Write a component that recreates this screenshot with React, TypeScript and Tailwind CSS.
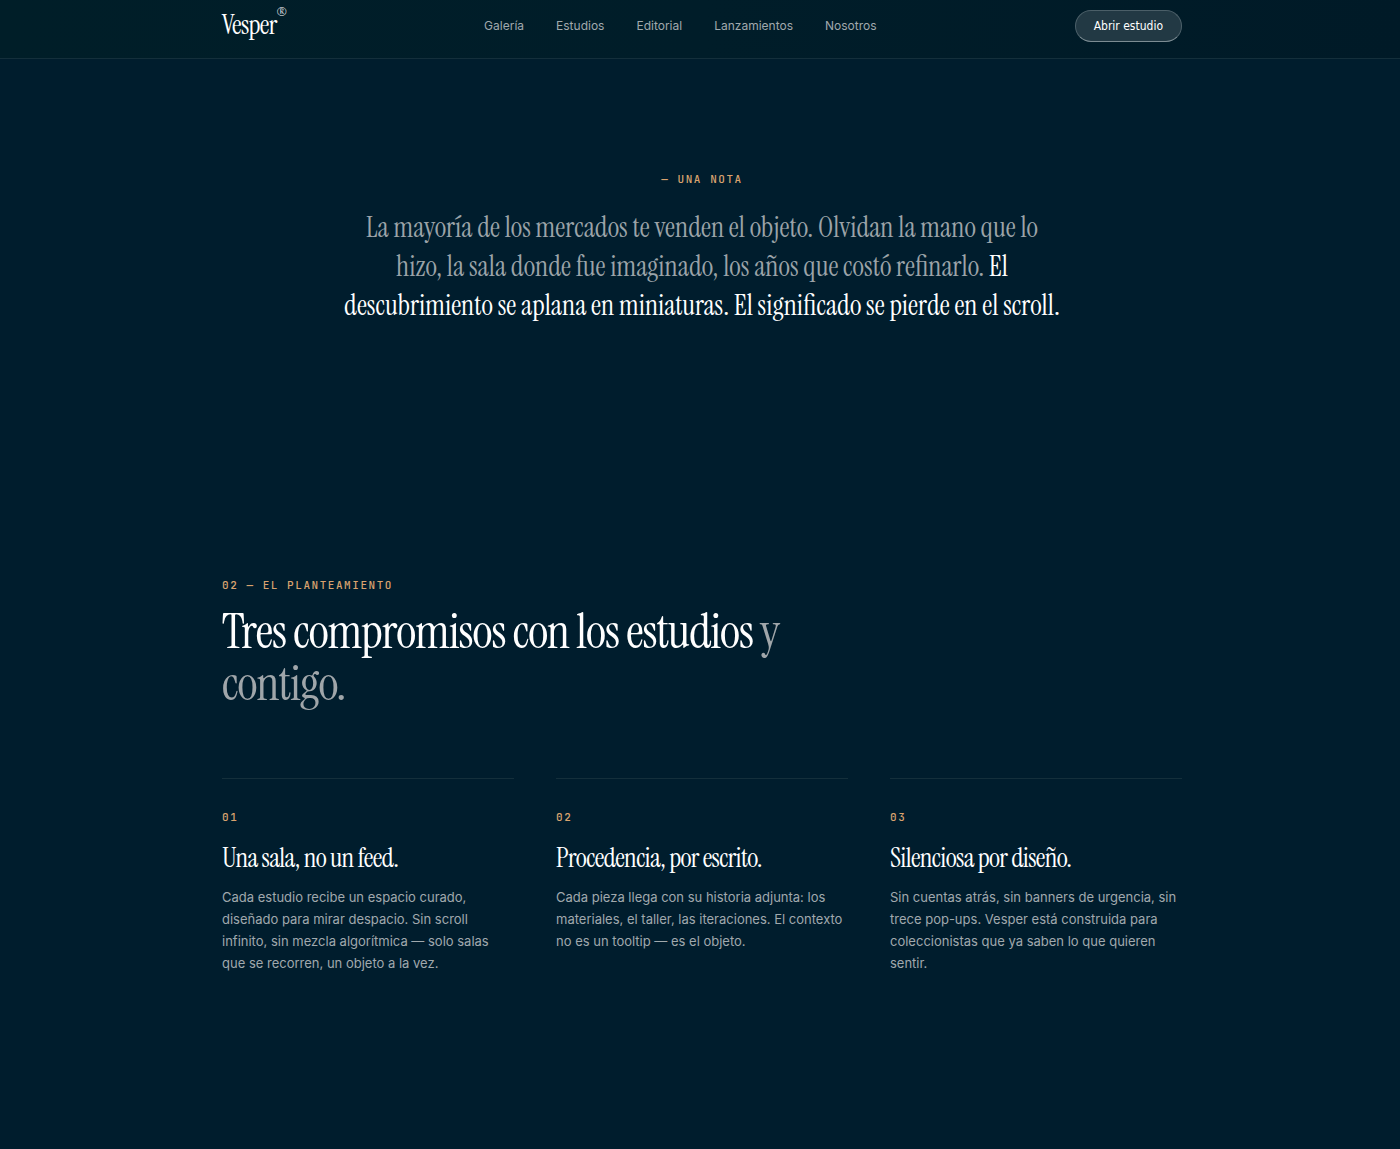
interface Commitment {
  number: string;
  title: string;
  body: string;
}

const NAV_LINKS = [
  { label: "Galería", href: "#galeria" },
  { label: "Estudios", href: "#estudios" },
  { label: "Editorial", href: "#editorial" },
  { label: "Lanzamientos", href: "#lanzamientos" },
  { label: "Nosotros", href: "#nosotros" },
];

const COMMITMENTS: Commitment[] = [
  {
    number: "01",
    title: "Una sala, no un feed.",
    body: "Cada estudio recibe un espacio curado, diseñado para mirar despacio. Sin scroll infinito, sin mezcla algorítmica — solo salas que se recorren, un objeto a la vez.",
  },
  {
    number: "02",
    title: "Procedencia, por escrito.",
    body: "Cada pieza llega con su historia adjunta: los materiales, el taller, las iteraciones. El contexto no es un tooltip — es el objeto.",
  },
  {
    number: "03",
    title: "Silenciosa por diseño.",
    body: "Sin cuentas atrás, sin banners de urgencia, sin trece pop-ups. Vesper está construida para coleccionistas que ya saben lo que quieren sentir.",
  },
];

const SERIF = "font-['Instrument_Serif','Liberation_Serif',serif]";
const LABEL = "font-['JetBrains_Mono','Liberation_Mono',monospace] text-[11px] font-medium leading-4 tracking-[0.14em] text-[#d9a36f]";

function Header() {
  return (
    <header className="border-b border-[#142f3b] bg-gradient-to-r from-[#001e28] via-[#001d29] to-[#001a27]">
      <div className="mx-auto flex h-[58px] max-w-[1024px] items-start justify-between pl-[34px] pr-[30px] pt-2">
        <a href="#" className={`${SERIF} flex items-start text-[27px] leading-[34px] tracking-tight text-white`}>
          Vesper
          <span className="text-xs leading-2">®</span>
        </a>
        <nav className="flex gap-8 pt-2 text-xs leading-5 text-[#a0a9ad]">
          {NAV_LINKS.map((link) => (
            <a key={link.label} href={link.href}>
              {link.label}
            </a>
          ))}
        </nav>
        <button
          type="button"
          className="mt-[2px] h-8 rounded-full border border-[#4b5f68] border-b-[#7c8c93] bg-[#223944] px-[18px] font-['DejaVu_Sans_Condensed','Open_Sans',sans-serif] text-xs text-white"
        >
          Abrir estudio
        </button>
      </div>
    </header>
  );
}

function Note() {
  return (
    <section className="mx-auto max-w-[1024px] pl-[34px] pr-[30px] pt-28 text-center">
      <p className={LABEL}>— UNA NOTA</p>
      <p className={`${SERIF} mx-auto mt-[21px] max-w-[718px] text-[28px] leading-[39px] text-[#9ba3a8]`}>
        La mayoría de los mercados te venden el objeto. Olvidan la mano que lo hizo, la sala donde fue imaginado, los
        años que costó refinarlo.{" "}
        <span className="text-white">
          El descubrimiento se aplana en miniaturas. El significado se pierde en el scroll.
        </span>
      </p>
    </section>
  );
}

function Approach() {
  return (
    <section className="mx-auto max-w-[1024px] pb-32 pl-[34px] pr-[30px] pt-[252px]">
      <p className={LABEL}>02 — EL PLANTEAMIENTO</p>
      <h2 className={`${SERIF} mt-3 max-w-[600px] text-[49px] leading-[52px] tracking-[-0.022em]`}>
        Tres compromisos con los estudios <span className="text-[#a0a6aa]">y contigo.</span>
      </h2>
      <div className="mt-[69px] grid grid-cols-3 gap-[42px]">
        {COMMITMENTS.map((item) => (
          <article key={item.number} className="border-t border-[#142f3b] pt-[30px]">
            <p className={LABEL}>{item.number}</p>
            <h3 className={`${SERIF} mt-4 text-[27px] leading-[34px] tracking-tight`}>{item.title}</h3>
            <p className="mt-[11px] text-[13px] leading-[22px] text-[#a0a9ad]">{item.body}</p>
          </article>
        ))}
      </div>
    </section>
  );
}

export default function App() {
  return (
    <div className="min-h-screen bg-[#001d2d] font-['Inter',sans-serif] text-white">
      <Header />
      <main>
        <Note />
        <Approach />
      </main>
    </div>
  );
}
